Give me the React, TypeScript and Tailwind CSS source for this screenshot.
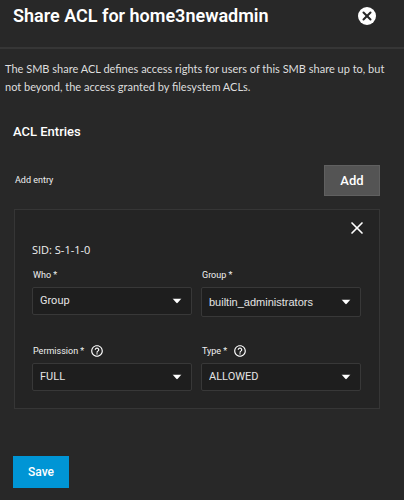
import { X } from 'lucide-react';
import { MdHelpOutline } from 'react-icons/md';

type FieldProps = {
  id: string;
  label: string;
  value: string;
  options: string[];
  help?: boolean;
  tall?: boolean;
};

const Field = ({ id, label, value, options, help, tall }: FieldProps) => (
  <div className="min-w-0 flex-1">
    <div className="flex h-4 items-center gap-1.5 pl-px">
      <label htmlFor={id} className="text-[9px] leading-4">
        {label} *
      </label>
      {help && (
        <button type="button" aria-label={`Help for ${label}`} className="text-white">
          <MdHelpOutline className="size-3.5" stroke="currentColor" />
        </button>
      )}
    </div>
    <div className="relative mt-1">
      <select
        id={id}
        defaultValue={value}
        className={`block w-full appearance-none rounded-xs border border-[#383838] bg-[#1e1e1e] pr-6 pl-[7px] text-[11px] text-[#e4e4e4] ${tall ? "h-[30px] font-['Liberation_Sans',sans-serif]" : 'h-7'}`}
      >
        {options.map((option) => (
          <option key={option}>{option}</option>
        ))}
      </select>
      <svg
        viewBox="0 0 10 5"
        className="pointer-events-none absolute top-1/2 right-2.5 h-[5px] w-2.5 -translate-y-1/2 fill-white"
      >
        <path d="M0.5 0h9L5 5z" />
      </svg>
    </div>
  </div>
);

export default function App() {
  return (
    <div className="min-h-screen bg-[#282828] font-['Roboto',sans-serif] text-[#f0f0f0]">
      <header className="flex h-[49px] items-start justify-between border-b-2 border-[#363636] pr-7 pl-[13px]">
        <h1 className="pt-1 text-lg leading-6 font-semibold text-white">
          Share ACL for home3newadmin
        </h1>
        <button
          type="button"
          aria-label="Close"
          className="mt-[7px] flex size-[18px] items-center justify-center rounded-full bg-white text-[#282828]"
        >
          <X className="size-3.5" strokeWidth={3.5} />
        </button>
      </header>

      <p className="px-[5px] pt-[11px] font-['Lato',sans-serif] text-[11px] leading-[18px] text-[#dedede]">
        The SMB share ACL defines access rights for users of this SMB share up to, but not beyond,
        the access granted by filesystem ACLs.
      </p>

      <form className="pr-6 pl-[13px]">
        <h2 className="mt-[26px] text-[13px] leading-5 font-medium text-white">ACL Entries</h2>

        <div className="mt-[23px] flex items-center justify-between">
          <span className="pl-0.5 text-[9px]">Add entry</span>
          <button
            type="button"
            className="h-[31px] w-14 border border-[#606060] bg-[#545454] text-[13px] font-medium text-white"
          >
            Add
          </button>
        </div>

        <section className="mt-[13px] ml-px border border-[#363636] bg-[#242424] pr-[18px] pb-[17px] pl-[17px]">
          <div className="flex justify-end pt-2">
            <button type="button" aria-label="Remove entry" className="-mr-1.5 text-white">
              <X className="size-5" strokeWidth={2} />
            </button>
          </div>
          <p className="mt-1 font-['Open_Sans',sans-serif] text-[11px] leading-4">SID: S-1-1-0</p>
          <div className="mt-[9px] flex items-start gap-[9px]">
            <Field id="who" label="Who" value="Group" options={['Group', 'User', 'everyone@']} />
            <Field
              id="group"
              label="Group"
              value="builtin_administrators"
              options={['builtin_administrators', 'builtin_users']}
              tall
            />
          </div>
          <div className="mt-[26px] flex items-start gap-[9px]">
            <Field id="permission" label="Permission" value="FULL" options={['FULL', 'CHANGE', 'READ']} help />
            <Field id="type" label="Type" value="ALLOWED" options={['ALLOWED', 'DENIED']} help />
          </div>
        </section>

        <button type="submit" className="mt-[47px] h-8 w-14 bg-[#0095d5] text-xs font-medium text-white">
          Save
        </button>
      </form>
    </div>
  );
}
